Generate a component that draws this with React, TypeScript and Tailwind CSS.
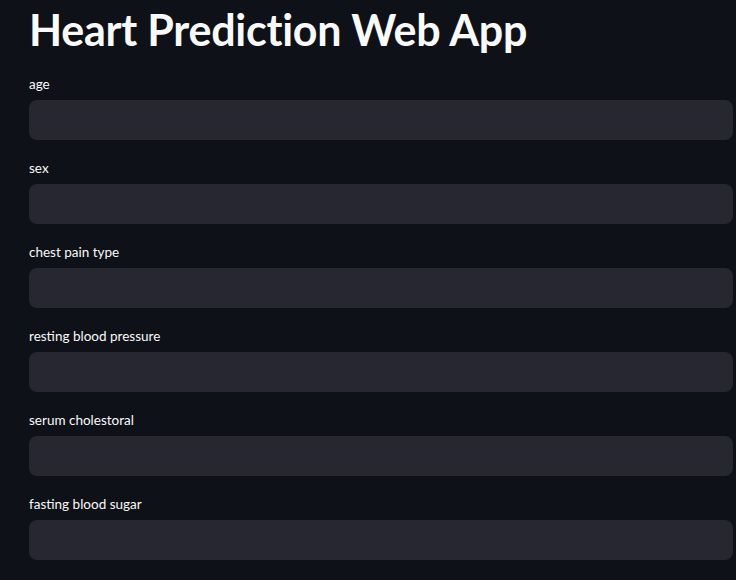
import React from "react";

const fields = [
  "age",
  "sex",
  "chest pain type",
  "resting blood pressure",
  "serum cholestoral",
  "fasting blood sugar",
];

const App = () => {
  return (
    <div
      className="min-h-screen bg-[#0e1117] text-[#fafafa] pl-[29px] pr-[3px]"
      style={{ fontFamily: "Lato, 'Noto Sans', sans-serif" }}
    >
      <h1 className="text-[43px] font-bold leading-[52px] pt-[4px] tracking-[-0.25px]">
        Heart Prediction Web App
      </h1>
      <div className="flex flex-col gap-4 pt-[16px]">
        {fields.map((f) => (
          <div key={f}>
            <label className="block h-6 mb-1 text-[13.5px] leading-[25px]">{f}</label>
            <div className="h-10 rounded-lg bg-[#262730]"></div>
          </div>
        ))}
      </div>
    </div>
  );
};

export default App;
